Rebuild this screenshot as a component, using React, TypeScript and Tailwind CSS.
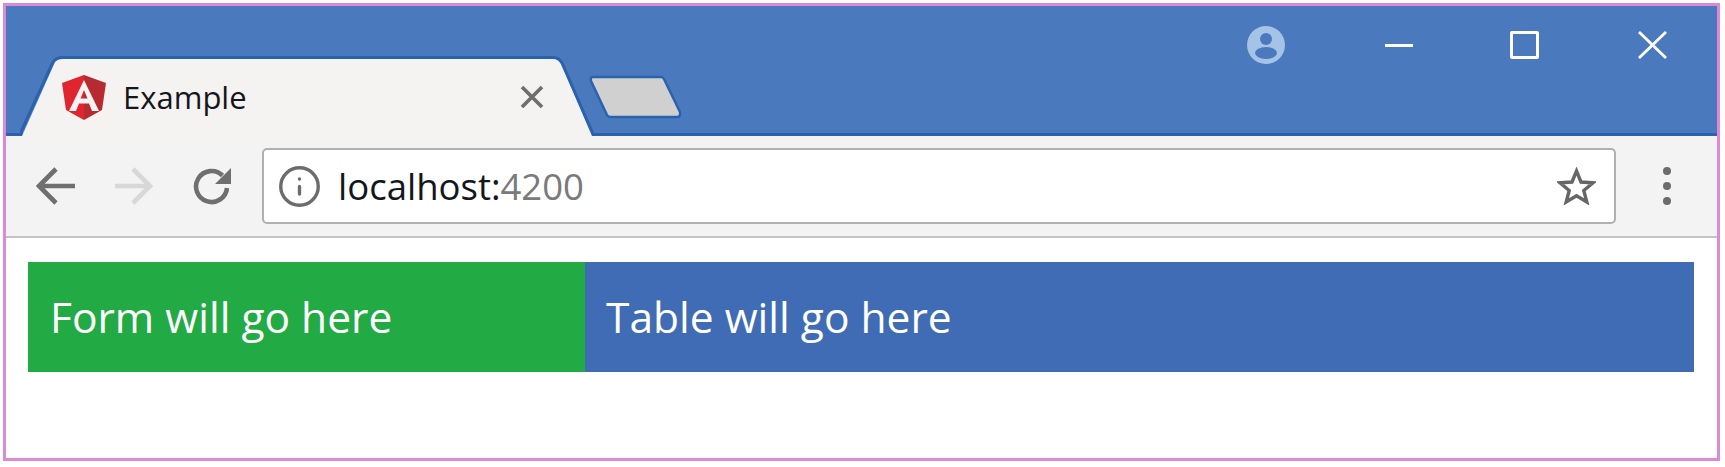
import { Info } from "lucide-react";

const sans = "font-['Open_Sans','Noto_Sans',sans-serif]";

function AngularLogo() {
  return (
    <svg viewBox="0 0 44 45" className="w-[44px] h-[45px] shrink-0">
      <path d="M22 0 L0 8 L4 35 L22 45 Z" fill="#e0252f" />
      <path d="M22 0 L44 8 L40 35 L22 45 Z" fill="#b72a30" />
      <path
        d="M22 5 L7 36 H14 L17 28.5 H27 L30 36 H37 Z M22 15 L25.5 23.5 H18.5 Z"
        fill="#f7f3f3"
        fillRule="evenodd"
      />
    </svg>
  );
}

function ActiveTab() {
  return (
    <div className="relative w-[574px] h-[80px] ml-[14px] shrink-0">
      <svg viewBox="0 0 574 80" className="absolute inset-0 w-full h-full">
        <path d="M2 80 L35 6 Q37 2 43 2 H533 Q538 2 541 7 L572 80 Z" fill="#f4f3f2" />
        <path
          d="M0 78 L33 6 Q36 1.5 43 1.5 H533 Q539 1.5 542 7 L573 78"
          fill="none"
          stroke="#2b62ad"
          strokeWidth="3"
        />
      </svg>
      <div className="relative flex items-center h-full pl-[42px] pr-[50px] pt-[2px]">
        <AngularLogo />
        <span className={`ml-[17px] text-[31px] leading-none text-[#14161c] ${sans}`}>Example</span>
        <svg viewBox="0 0 24 22" className="ml-auto w-[24px] h-[22px] text-[#6e6e6e]">
          <path d="M2 1 L22 21 M22 1 L2 21" stroke="currentColor" strokeWidth="3.6" fill="none" />
        </svg>
      </div>
    </div>
  );
}

function NewTabButton() {
  return (
    <svg viewBox="0 0 94 46" className="w-[94px] h-[46px] ml-[-6px] mb-[16px] shrink-0">
      <path
        d="M5 3 H73 Q75 3 76 5 L92 38 Q93 43 89 43 H23 Q20 43 19 41 L3 7 Q2 3 5 3 Z"
        fill="#d0d0d0"
        stroke="#2b62ad"
        strokeWidth="2.5"
      />
    </svg>
  );
}

function WindowControls() {
  return (
    <div className="flex items-start pr-[50px]">
      <svg viewBox="0 0 38 38" className="w-[38px] h-[38px] mt-[20px] mr-[100px]">
        <circle cx="19" cy="19" r="19" fill="#a4c3e6" />
        <circle cx="19" cy="13" r="6" fill="#4a7abd" />
        <ellipse cx="19" cy="27" rx="11" ry="6" fill="#4a7abd" />
      </svg>
      <div className="w-[28px] h-[3px] bg-white mt-[38px] mr-[97px]" />
      <div className="w-[29px] h-[28px] border-[3px] border-white rounded-[2px] mt-[25px] mr-[99px]" />
      <svg viewBox="0 0 29 28" className="w-[29px] h-[28px] mt-[25px] text-white">
        <path d="M1 1 L28 27 M28 1 L1 27" stroke="currentColor" strokeWidth="2.8" fill="none" />
      </svg>
    </div>
  );
}

export default function App() {
  return (
    <div className="w-[1725px] h-[467px] bg-white pl-[3px] pt-[3px] pr-[5px] pb-[6px]">
      <div className="h-full border-[3px] border-[#dc8ad6] flex flex-col">
        {/* Tab strip */}
        <div className="h-[130px] bg-[#4a7abd] border-b-[3px] border-[#2b62ad] flex items-start justify-between shrink-0">
          <div className="flex items-end h-[130px] self-start">
            <ActiveTab />
            <NewTabButton />
          </div>
          <WindowControls />
        </div>

        {/* Toolbar */}
        <div className="h-[102px] bg-[#f3f3f3] border-b-2 border-[#c4c4c4] flex items-center shrink-0">
          <svg viewBox="0 0 39 38" className="ml-[30px] w-[39px] h-[38px] text-[#6f6f6f]">
            <path d="M39 19 H4 M20 2 L3 19 L20 36" stroke="currentColor" strokeWidth="4.6" fill="none" />
          </svg>
          <svg viewBox="0 0 38 38" className="ml-[40px] w-[38px] h-[38px] text-[#d8d8d8]">
            <path d="M0 19 H34 M18 2 L35 19 L18 36" stroke="currentColor" strokeWidth="4.6" fill="none" />
          </svg>
          <svg viewBox="0 0 40 38" className="ml-[39px] w-[40px] h-[38px] text-[#6f6f6f]">
            <path d="M30.5 8.5 A15.5 15.5 0 1 0 35 21" stroke="currentColor" strokeWidth="4.6" fill="none" />
            <path d="M39 1 V17 H23 Z" fill="currentColor" />
          </svg>
          <div className="ml-[30px] w-[1354px] h-[76px] bg-white border-2 border-[#b0b0b0] rounded-[5px] flex items-center pl-[13px] pr-[18px]">
            <Info size={45} strokeWidth={1.8} className="text-[#6c6c6c]" />
            <span className={`ml-[16px] text-[36.5px] leading-none text-[#14161c] ${sans}`}>
              localhost:<span className="text-[#7a7a7a]">4200</span>
            </span>
            <svg viewBox="0 0 39 38" className="ml-auto w-[39px] h-[38px] text-[#666666]">
              <path
                d="M19.5 4 L24 15 L36 15.8 L26.8 23.5 L29.8 35 L19.5 28.8 L9.2 35 L12.2 23.5 L3 15.8 L15 15 Z"
                stroke="currentColor"
                strokeWidth="3.4"
                fill="none"
              />
            </svg>
          </div>
          <div className="ml-[47px] flex flex-col items-center gap-[7px]">
            <div className="w-[8px] h-[8px] rounded-full bg-[#6c6c6c]" />
            <div className="w-[8px] h-[8px] rounded-full bg-[#6c6c6c]" />
            <div className="w-[8px] h-[8px] rounded-full bg-[#6c6c6c]" />
          </div>
        </div>

        {/* Page content */}
        <div className="flex-1 bg-white pt-[24px] pl-[22px] pr-[23px]">
          <div className={`flex h-[110px] text-[42.5px] text-white ${sans}`}>
            <div className="w-[557px] bg-[#22aa45] flex items-center pl-[22px]">Form will go here</div>
            <div className="flex-1 bg-[#3f6cb4] flex items-center pl-[21px]">Table will go here</div>
          </div>
        </div>
      </div>
    </div>
  );
}
